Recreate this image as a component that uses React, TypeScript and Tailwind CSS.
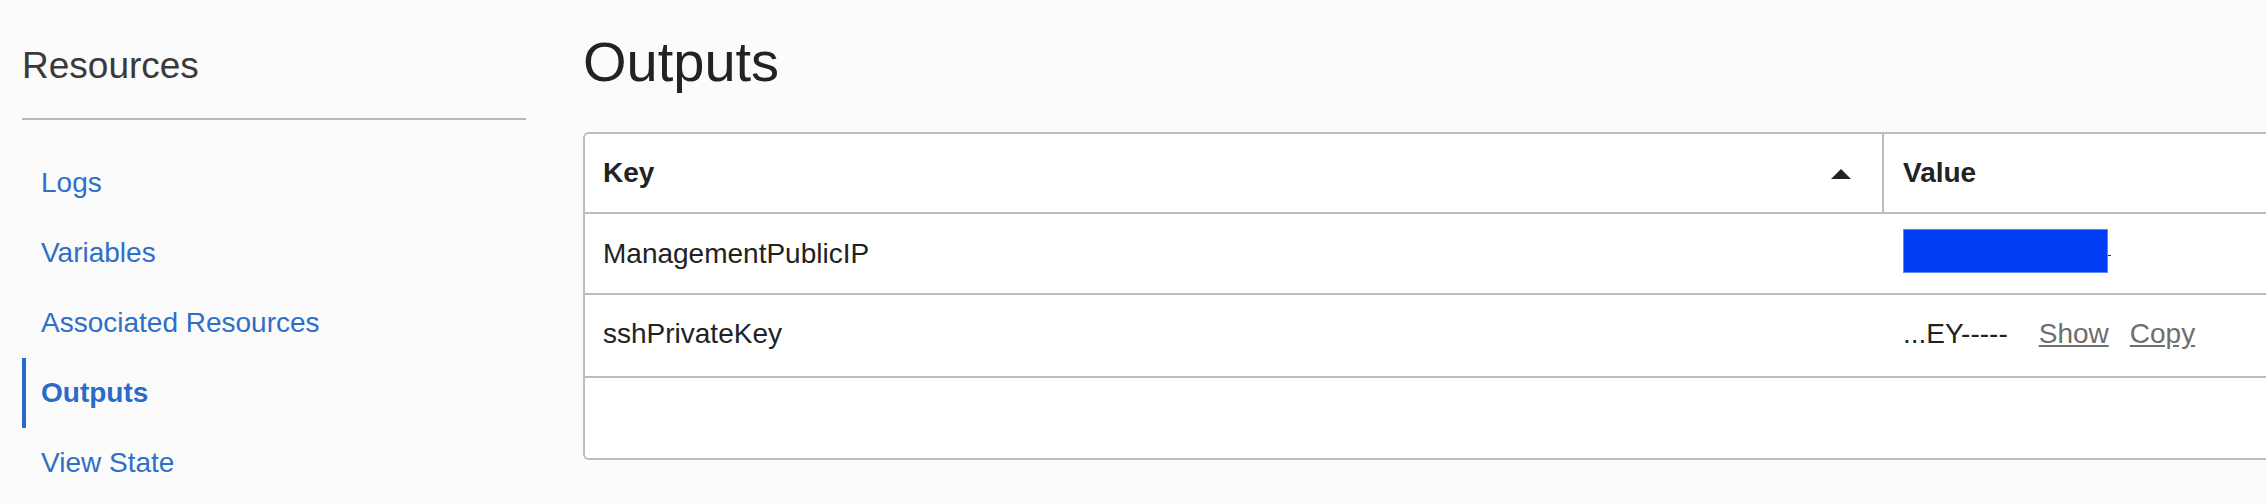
const navItems = [
  { label: "Logs" },
  { label: "Variables" },
  { label: "Associated Resources" },
  { label: "Outputs", active: true },
  { label: "View State" },
];

function Sidebar() {
  return (
    <aside className="w-[526px] shrink-0 pl-[22px]">
      <h2 className="pt-[47px] text-[37px] leading-[37px] font-normal text-[#3a3a3a]">Resources</h2>
      <div className="mt-[34px] h-[2px] bg-[#b6b9bd]" />
      <nav className="mt-[28px] flex flex-col">
        {navItems.map((item) => (
          <a
            key={item.label}
            href="#"
            className={
              item.active
                ? "h-[70px] border-l-4 border-[#2a6bc8] pl-[15px] text-[28px] leading-[70px] font-bold text-[#2a6bc8]"
                : "h-[70px] border-l-4 border-transparent pl-[15px] text-[28px] leading-[70px] text-[#2e6fc7]"
            }
          >
            {item.label}
          </a>
        ))}
      </nav>
    </aside>
  );
}

function OutputsTable() {
  return (
    <div className="mt-[42px] w-[1800px] rounded-l-[6px] border-2 border-r-0 border-[#b9bcc0] bg-white text-[28px] text-[#222]">
      {/* header */}
      <div className="flex h-[80px] border-b-2 border-[#b9bcc0]">
        <div className="flex w-[1297px] items-center justify-between pl-[18px] pr-[31px]">
          <span className="font-bold leading-[78px]">Key</span>
          <svg width="20" height="10" viewBox="0 0 20 10" className="mt-[1px]">
            <path d="M10 0 L20 10 L0 10 Z" fill="#222" />
          </svg>
        </div>
        <div className="w-[2px] bg-[#b9bcc0]" />
        <div className="flex items-center pl-[19px]">
          <span className="font-bold leading-[78px]">Value</span>
        </div>
      </div>

      {/* ManagementPublicIP */}
      <div className="flex h-[81px] border-b-2 border-[#b9bcc0]">
        <div className="flex w-[1299px] items-center pl-[18px]">ManagementPublicIP</div>
        <div className="flex items-center pl-[19px]">
          <span className="mb-[5px] h-[44px] w-[205px] border border-[#5b86ff] bg-[#003df5]" />
          <span className="mt-[4px] h-px w-[3px] bg-[#333]" />
        </div>
      </div>

      {/* sshPrivateKey */}
      <div className="flex h-[83px] border-b-2 border-[#b9bcc0]">
        <div className="flex w-[1299px] items-center pb-[3px] pl-[18px]">sshPrivateKey</div>
        <div className="flex items-center pb-[3px] pl-[19px]">
          <span>...EY-----</span>
          <a href="#" className="ml-[31px] text-[#6e6e6e] underline">Show</a>
          <a href="#" className="ml-[21px] text-[#6e6e6e] underline">Copy</a>
        </div>
      </div>

      {/* empty row */}
      <div className="h-[80px]" />
    </div>
  );
}

export default function App() {
  return (
    <div className="flex h-[504px] w-[2266px] overflow-hidden bg-[#fbfbfb] font-['Liberation_Sans',Arial,sans-serif]">
      <Sidebar />
      <main className="ml-[57px] min-w-0 flex-1">
        <h1 className="pt-[34px] text-[56px] leading-[56px] font-normal text-[#222]">Outputs</h1>
        <OutputsTable />
      </main>
    </div>
  );
}
